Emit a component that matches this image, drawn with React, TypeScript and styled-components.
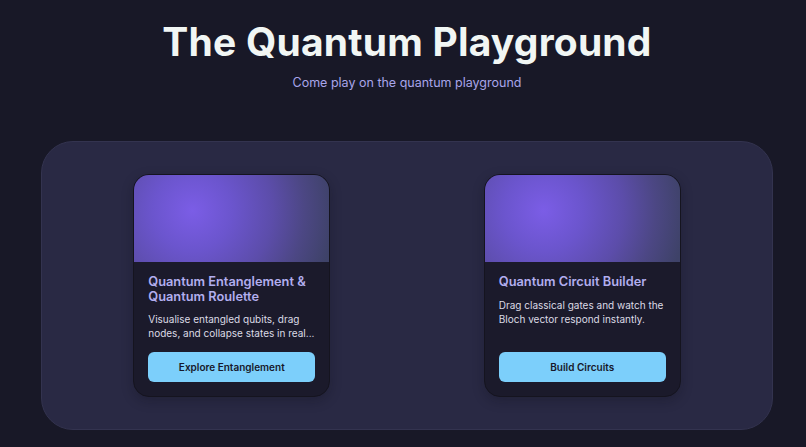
import styled, { createGlobalStyle } from "styled-components";

const GlobalStyle = createGlobalStyle`
  html, body {
    margin: 0;
    padding: 0;
    background: #181827;
  }
  body {
    font-family: Inter, "Noto Sans", sans-serif;
    -webkit-font-smoothing: antialiased;
  }
`;

const Page = styled.main`
  min-height: 447px;
  box-sizing: border-box;
  padding: 18px 33px 0 41px;
  display: flex;
  flex-direction: column;
  align-items: center;
`;

const Title = styled.h1`
  margin: 0;
  font-family: Inter, "DejaVu Sans", sans-serif;
  font-weight: 700;
  font-size: 39px;
  line-height: 48px;
  letter-spacing: 0.2px;
  color: #f1f6f4;
`;

const Subtitle = styled.p`
  margin: 8px 0 0;
  font-size: 12.5px;
  line-height: 18px;
  color: #a8a5ea;
`;

const Panel = styled.section`
  margin-top: 49px;
  width: 732px;
  height: 289px;
  box-sizing: border-box;
  padding: 32px;
  border-radius: 32px;
  background: #292944;
  border: 1px solid #33334f;
  display: grid;
  grid-template-columns: 1fr 1fr;
  column-gap: 35px;
  justify-items: center;
  align-items: start;
`;

const Card = styled.article`
  width: 197px;
  height: 223px;
  box-sizing: border-box;
  border-radius: 16px;
  overflow: hidden;
  background: #1b1a2b;
  border: 1px solid #15141f;
  box-shadow: 0 4px 12px rgba(10, 10, 20, 0.25);
  display: flex;
  flex-direction: column;
`;

const Glow = styled.div`
  height: 87px;
  flex: none;
  background: radial-gradient(
    circle at 30% 41%,
    #7b5de6 0px,
    #6b55cd 40px,
    #5c4daa 80px,
    #4c4784 112px,
    #3e4268 142px,
    #3c4266 200px
  );
`;

const Body = styled.div`
  flex: 1;
  padding: 13px 14px 14px;
  display: flex;
  flex-direction: column;
`;

const CardTitle = styled.h2`
  margin: 0;
  font-size: 12.8px;
  line-height: 14.5px;
  font-weight: 600;
  color: #b2aeef;
`;

const CardText = styled.p`
  margin: 8px 0 0;
  font-size: 10px;
  line-height: 14px;
  color: #dcdbe6;
`;

const Action = styled.button`
  margin-top: auto;
  height: 30px;
  width: 100%;
  border: none;
  border-radius: 6px;
  background: #7ccffb;
  color: #17182a;
  font-family: Inter, "Noto Sans", sans-serif;
  font-size: 10px;
  font-weight: 600;
  cursor: pointer;
`;

type Game = {
  title: string;
  text: string;
  action: string;
};

const games: Game[] = [
  {
    title: "Quantum Entanglement & Quantum Roulette",
    text: "Visualise entangled qubits, drag nodes, and collapse states in real...",
    action: "Explore Entanglement",
  },
  {
    title: "Quantum Circuit Builder",
    text: "Drag classical gates and watch the Bloch vector respond instantly.",
    action: "Build Circuits",
  },
];

const GameCard = ({ title, text, action }: Game) => (
  <Card>
    <Glow />
    <Body>
      <CardTitle>{title}</CardTitle>
      <CardText>{text}</CardText>
      <Action>{action}</Action>
    </Body>
  </Card>
);

export default function App() {
  return (
    <>
      <GlobalStyle />
      <Page>
        <Title>The Quantum Playground</Title>
        <Subtitle>Come play on the quantum playground</Subtitle>
        <Panel>
          {games.map((g) => (
            <GameCard key={g.action} {...g} />
          ))}
        </Panel>
      </Page>
    </>
  );
}
